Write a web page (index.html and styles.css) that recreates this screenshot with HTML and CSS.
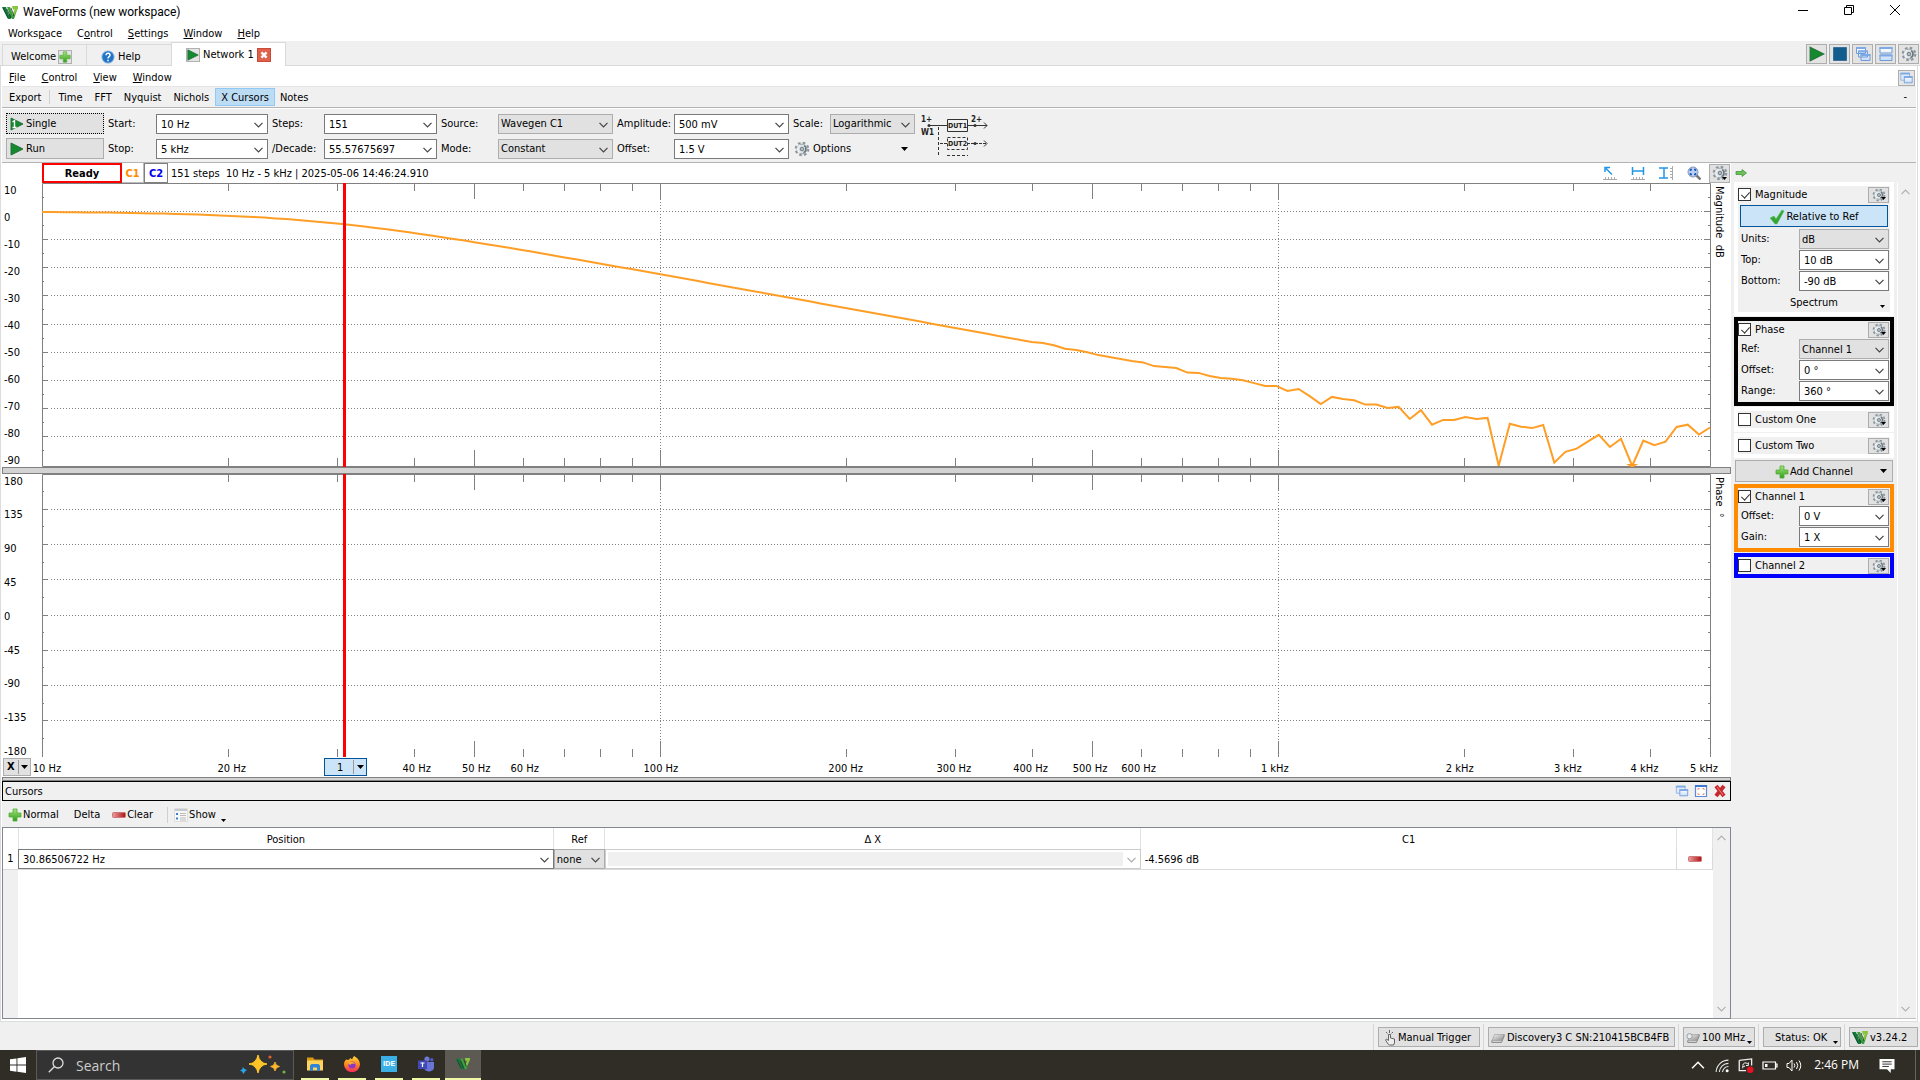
FILE: index.html
```html
<!DOCTYPE html>
<html lang="en">
<head>
<meta charset="utf-8">
<title>WaveForms (new workspace)</title>
<link rel="stylesheet" href="styles.css">
</head>
<body>
<svg class="defs" aria-hidden="true">
  <defs>
    <linearGradient id="g-plus" x1="0" y1="0" x2="0" y2="1"><stop offset="0" stop-color="#a5e27c"/><stop offset="1" stop-color="#2f9e1c"/></linearGradient>
    <linearGradient id="g-minus" x1="0" y1="0" x2="1" y2="0"><stop offset="0" stop-color="#e9a0a0"/><stop offset="1" stop-color="#b01217"/></linearGradient>
    <linearGradient id="g-win" x1="0" y1="0" x2="0" y2="1"><stop offset="0" stop-color="#fff"/><stop offset="1" stop-color="#c9dcf6"/></linearGradient>
    <linearGradient id="g-metal" x1="0" y1="0" x2="1" y2="1"><stop offset="0" stop-color="#f2f2f2"/><stop offset="1" stop-color="#8a8a8a"/></linearGradient>
    <linearGradient id="g-fox" x1="0" y1="0" x2="0" y2="1"><stop offset="0" stop-color="#ffd83a"/><stop offset=".5" stop-color="#ff8a1e"/><stop offset="1" stop-color="#f5275e"/></linearGradient>
  </defs>
  <symbol id="chev" viewBox="0 0 9 6"><path d="M.5.8 4.500 4.800 8.500.8" fill="none" stroke="currentColor" stroke-width="1.200"/></symbol>
  <symbol id="caret" viewBox="0 0 7 4"><path d="M0 0h7L3.500 4z" fill="#000"/></symbol>
  <symbol id="play" viewBox="0 0 14 14"><path d="M1 1 13 7 1 13z" fill="#15892e" stroke="#24703a"/></symbol>
  <symbol id="single" viewBox="0 0 14 14"><path d="M1 1 13 7 1 13z" fill="#15892e" stroke="#24703a"/><path d="M2.500 5 4.500 3.600V10.500M2.500 10.500h4" fill="none" stroke="#fff" stroke-width="1.400"/></symbol>
  <symbol id="gear" viewBox="0 0 16 16"><circle cx="8" cy="8" r="6.300" fill="none" stroke="#8a959c" stroke-width="2" stroke-dasharray="2.600 2.350"/><circle cx="8" cy="8" r="4.900" fill="#dfe5e8" stroke="#98a3aa"/><path d="M6 4.200a4.200 4.200 0 0 0 0 7.600" fill="none" stroke="#f4f7f8" stroke-width="1.200"/><path d="M10.200 4.600a4 4 0 0 1-.8 7" fill="none" stroke="#68747b" stroke-width="1.500"/><circle cx="8" cy="8" r="1.800" fill="#b3bcc1" stroke="#5d686e" stroke-width=".8"/></symbol>
  <symbol id="plus" viewBox="0 0 14 14"><path d="M5 1h4v4h4v4H9v4H5V9H1V5h4z" fill="url(#g-plus)" stroke="#4faf34" stroke-width=".8"/></symbol>
  <symbol id="minus" viewBox="0 0 14 6"><rect x=".5" y=".5" width="13" height="5" rx="1" fill="url(#g-minus)" stroke="#c77"/></symbol>
  <symbol id="logo" viewBox="0 0 16 13"><path d="M0 1h4l3 8 1-3 2 5-1.500 2H6z" fill="#0f7a3c"/><path d="M5 1h3l3 8 3-8h2l-4 12h-2z" fill="#3f9e3c"/><path d="M10 0h6v2l-4 8-1-3 2-4-2 1z" fill="#8ac53f"/><path d="M1 2 6 12M5 3l4 9M9 2l3 8" stroke="#143c26" stroke-width=".8" fill="none"/></symbol>
  <symbol id="wins" viewBox="0 0 16 16"><g fill="url(#g-win)" stroke="#6f9bd8"><path d="M1.500 1.500h9v6h-9zM3.500 5h9v6h-9zM6 8.500h9v6H6z"/></g><path d="M1 2h10M3 5.500h10M5.500 9h10" stroke="#7fa9e4" stroke-width="2"/></symbol>
  <symbol id="wins2" viewBox="0 0 16 16"><path d="M1.500 2.500h10v8h-10z" fill="#dfeafa" stroke="#8fb2df"/><path d="M5.500 6.500h9v7h-9z" fill="url(#g-win)" stroke="#6f9bd8"/><path d="M1 3h11M5 7h10" stroke="#7fa9e4" stroke-width="2"/></symbol>
  <symbol id="tiles" viewBox="0 0 16 16"><path d="M2 1.500h12v5.500H2zM2 9h12v5.500H2z" fill="url(#g-win)" stroke="#6f9bd8"/><path d="M1.500 2h13M1.500 9.500h13" stroke="#7fa9e4" stroke-width="2"/></symbol>
</svg>

<header class="titlebar">
  <svg class="i-logo"><use href="#logo"/></svg>
  <h1>WaveForms (new workspace)</h1>
  <div class="winctl">
    <button aria-label="Minimize"><svg viewBox="0 0 12 12"><path d="M1 6.500h10"/></svg></button>
    <button aria-label="Restore"><svg viewBox="0 0 12 12"><path d="M1.500 3.500h7v7h-7zM3.500 3.500v-2h7v7h-2"/></svg></button>
    <button aria-label="Close"><svg viewBox="0 0 12 12"><path d="M1 1 11 11M11 1 1 11"/></svg></button>
  </div>
</header>

<nav class="menu">
  <a href="#">Works<u>p</u>ace</a><a href="#">C<u>o</u>ntrol</a><a href="#"><u>S</u>ettings</a><a href="#"><u>W</u>indow</a><a href="#"><u>H</u>elp</a>
</nav>

<div class="tabs">
  <button class="tab welcome">Welcome <span class="boxed"><svg><use href="#plus"/></svg></span></button>
  <button class="tab help"><svg class="i-help" viewBox="0 0 14 14"><circle cx="7" cy="7" r="6.300" fill="#2274c8" stroke="#bcd3ea"/><path d="M5 5.200c0-2.600 4-2.500 4 0C9 6.800 7 6.600 7 8.500M7 9.700v1.500" fill="none" stroke="#fff" stroke-width="1.500"/></svg> Help</button>
  <button class="tab active"><span class="boxed"><svg><use href="#play"/></svg></span>Network 1<span class="boxed close"><svg viewBox="0 0 14 14"><path d="M4 4 10 10M10 4 4 10" stroke="#fff" stroke-width="2.800"/></svg></span></button>
  <div class="tabtools">
    <button aria-label="Run all"><svg><use href="#play"/></svg></button>
    <button aria-label="Stop all"><svg viewBox="0 0 14 14"><path d="M.5.500h13v13H.5z" fill="#135c8e" stroke="#3a7099"/></svg></button>
    <button aria-label="Cascade"><svg><use href="#wins"/></svg></button>
    <button aria-label="Tile"><svg><use href="#tiles"/></svg></button>
    <button aria-label="Settings"><svg><use href="#gear"/></svg></button>
  </div>
</div>

<main class="frame">
  <nav class="menu inner">
    <a href="#"><u>F</u>ile</a><a href="#"><u>C</u>ontrol</a><a href="#"><u>V</u>iew</a><a href="#"><u>W</u>indow</a>
    <button class="undock" aria-label="Undock"><svg><use href="#wins2"/></svg></button>
  </nav>
  <div class="toolbar">
    <button>Export</button><i class="sep"></i><button>Time</button><button>FFT</button><button>Nyquist</button><button>Nichols</button><button class="on">X Cursors</button><button class="notes">Notes</button><span class="dash">-</span>
  </div>

  <section class="params">
    <button class="push focus"><svg><use href="#single"/></svg>Single</button>
    <label for="start">Start:</label>
    <div class="combo"><input id="start" value="10 Hz"><svg><use href="#chev"/></svg></div>
    <label for="steps">Steps:</label>
    <div class="combo"><input id="steps" value="151"><svg><use href="#chev"/></svg></div>
    <label for="source">Source:</label>
    <div class="combo pick"><select id="source"><option>Wavegen C1</option></select><svg><use href="#chev"/></svg></div>
    <label for="amp">Amplitude:</label>
    <div class="combo"><input id="amp" value="500 mV"><svg><use href="#chev"/></svg></div>
    <label for="scale">Scale:</label>
    <div class="combo pick"><select id="scale"><option>Logarithmic</option></select><svg><use href="#chev"/></svg></div>
    <svg class="diagram" viewBox="0 0 70 42">
      <g fill="none" stroke="#333"><path d="M7 10.500h19M46 10.500h20M63 7.500l3 3-3 3M26.500 4.500h20v12h-20z"/><path d="M17.500 12v30" stroke-dasharray="3 2"/><path d="M19 28.500h7M46 28.500h20" stroke-dasharray="3 1"/><path d="M63 25.500l3 3-3 3"/><path d="M26.500 22.500h20v12h-20zM26 40.500h21" stroke-dasharray="3 2"/></g>
      <g fill="#333"><circle cx="8" cy="10.500" r="1.500"/><circle cx="54" cy="10.500" r="1.500"/><circle cx="54" cy="28.500" r="1.500"/></g>
      <g class="dut"><text x="0" y="7">1+</text><text x="0" y="20">W1</text><text x="50" y="7">2+</text><text x="27" y="13">DUT1</text><text x="27" y="31">DUT2</text></g>
    </svg>
    <button class="push"><svg><use href="#play"/></svg>Run</button>
    <label for="stop">Stop:</label>
    <div class="combo"><input id="stop" value="5 kHz"><svg><use href="#chev"/></svg></div>
    <label for="decade">/Decade:</label>
    <div class="combo"><input id="decade" value="55.57675697"><svg><use href="#chev"/></svg></div>
    <label for="mode">Mode:</label>
    <div class="combo pick"><select id="mode"><option>Constant</option></select><svg><use href="#chev"/></svg></div>
    <label for="offset">Offset:</label>
    <div class="combo"><input id="offset" value="1.5 V"><svg><use href="#chev"/></svg></div>
    <button class="options"><svg class="i16"><use href="#gear"/></svg>Options<svg class="i-caret"><use href="#caret"/></svg></button>
  </section>

  <div class="work">
    <div class="left">
      <section class="plots">
        <div class="plothead">
          <span class="ready">Ready</span><span class="ch c1">C1</span><span class="ch c2">C2</span>
          <span class="info">151 steps&nbsp; 10 Hz - 5 kHz | 2025-05-06 14:46:24.910</span>
          <div class="tools">
            <button aria-label="Point measure"><svg viewBox="0 0 14 14"><path d="M3 2.500l6 6M2 6V1.500h5" fill="none" stroke="#2196e8" stroke-width="1.500"/><path d="M0 13.500h14M2.500 11v2M5.500 11v2M8.500 11v2M11.500 11v2" stroke="#aaa"/></svg></button>
            <button aria-label="Horizontal measure"><svg viewBox="0 0 14 14"><path d="M1.500 1v8M12.500 1v8M2 5h10" fill="none" stroke="#2196e8" stroke-width="1.500"/><path d="M0 13.500h14M2.500 11v2M5.500 11v2M8.500 11v2M11.500 11v2" stroke="#aaa"/></svg></button>
            <button aria-label="Vertical measure"><svg viewBox="0 0 14 14"><path d="M0 2h9M0 12h9M5 2v10" fill="none" stroke="#2196e8" stroke-width="1.500"/><path d="M13.500 0v14M11 2.500h2M11 5.500h2M11 8.500h2M11 11.500h2" stroke="#aaa"/></svg></button>
            <button aria-label="Zoom"><svg viewBox="0 0 14 14"><path d="M9 9l4.500 4.500" stroke="#777" stroke-width="2.500"/><circle cx="6" cy="6" r="5" fill="#b7cff2" stroke="#8497b5"/><path d="M3.500 5V3.500H5M7 3.500h1.500V5M8.500 7v1.500H7M5 8.500H3.500V7" fill="none" stroke="#2458b8" stroke-width="1.500"/></svg></button>
          </div>
          <button class="gearbtn tall" aria-label="Plot options"><svg class="i16"><use href="#gear"/></svg><svg class="dd"><use href="#caret"/></svg></button>
        </div>
        <div class="plotrow">
          <div class="yaxis"><span>10</span><span>0</span><span>-10</span><span>-20</span><span>-30</span><span>-40</span><span>-50</span><span>-60</span><span>-70</span><span>-80</span><span>-90</span></div>
          <div class="canvas" id="mag"></div>
          <div class="vname">Magnitude&nbsp; dB</div>
        </div>
        <div class="splitter"></div>
        <div class="plotrow">
          <div class="yaxis"><span>180</span><span>135</span><span>90</span><span>45</span><span>0</span><span>-45</span><span>-90</span><span>-135</span><span>-180</span></div>
          <div class="canvas" id="phase"></div>
          <div class="vname">Phase&nbsp; °</div>
        </div>
        <div class="xrow">
          <button class="split-btn"><b>X</b><svg><use href="#caret"/></svg></button>
          <div class="xaxis">
            <span style="left:0%">10 Hz</span><span style="left:11.15%">20 Hz</span><span style="left:22.31%">40 Hz</span><span style="left:25.9%">50 Hz</span><span style="left:28.83%">60 Hz</span><span style="left:37.05%">100 Hz</span><span style="left:48.2%">200 Hz</span><span style="left:54.73%">300 Hz</span><span style="left:59.36%">400 Hz</span><span style="left:62.95%">500 Hz</span><span style="left:65.88%">600 Hz</span><span style="left:74.1%">1 kHz</span><span style="left:85.26%">2 kHz</span><span style="left:91.78%">3 kHz</span><span style="left:96.41%">4 kHz</span><span style="left:100%">5 kHz</span>
            <button class="split-btn cursor" style="left:18.05%"><span>1</span><svg><use href="#caret"/></svg></button>
          </div>
        </div>
      </section>
      <div class="splitter thin"></div>
      <section class="dock">
        <div class="dockhead"><h2>Cursors</h2>
          <button aria-label="Float"><svg><use href="#wins2"/></svg></button>
          <button aria-label="Maximize"><svg viewBox="0 0 14 14"><path d="M1.500 1.500h11v11h-11z" fill="#fff" stroke="#5b8ad6" stroke-width="1.200"/><path d="M1 2h12" stroke="#3f78d0" stroke-width="2"/><path d="M4 6V4.500h1.500M8.500 4.500H10V6M10 9v1.500H8.500M5.500 10.500H4V9" fill="none" stroke="#e58a7a"/></svg></button>
          <button aria-label="Close"><svg viewBox="0 0 14 14"><path d="M3 2l8 10M11 2 3 12" stroke="#c8282d" stroke-width="4"/><path d="M4 3l6 8" stroke="#e98585"/></svg></button>
        </div>
        <div class="docktools">
          <button><svg class="i14"><use href="#plus"/></svg>Normal</button><button class="delta">Delta</button><button><svg class="i-minus"><use href="#minus"/></svg>Clear</button><i class="sep"></i>
          <button class="show"><svg class="i14" viewBox="0 0 14 14"><path d="M.5.500h13v13H.5z" fill="#f8f8f8" stroke="#ddd"/><path d="M1 2h12" stroke="#c5cad0" stroke-width="2"/><path d="M2 6h2M2 10.500h2" stroke="#3a80cf" stroke-width="2"/><path d="M6 5.500h6M6 7.500h6M6 10h6M6 12h6" stroke="#bbb"/></svg>Show<svg class="i-caret low"><use href="#caret"/></svg></button>
        </div>
        <div class="grid">
          <div class="gridbody">
            <table>
              <colgroup><col class="k-n"><col><col class="k-ref"><col><col><col class="k-del"></colgroup>
              <thead><tr><th></th><th>Position</th><th>Ref</th><th>Δ X</th><th>C1</th><th></th></tr></thead>
              <tbody><tr>
                <td class="num">1</td>
                <td><div class="combo"><input aria-label="Position" value="30.86506722 Hz"><svg><use href="#chev"/></svg></div></td>
                <td><div class="combo pick"><select aria-label="Ref"><option>none</option></select><svg><use href="#chev"/></svg></div></td>
                <td><div class="combo off"><input aria-label="Delta X" disabled><svg><use href="#chev"/></svg></div></td>
                <td class="val">-4.5696 dB</td>
                <td class="del"><button aria-label="Remove"><svg class="i-minus"><use href="#minus"/></svg></button></td>
              </tr></tbody>
            </table>
          </div>
          <div class="scroll"><svg class="up"><use href="#chev"/></svg><svg><use href="#chev"/></svg></div>
        </div>
      </section>
    </div>

    <aside>
      <div class="sidehead"><svg viewBox="0 0 12 8"><path d="M1 2.500h6V.500L11.500 4 7 7.500v-2H1z" fill="#6fbf5a" stroke="#3f9a3a" stroke-width=".8"/></svg></div>
      <div class="sidebody">
        <div class="cards">
          <section class="card">
            <div class="ch-head"><label><input type="checkbox" checked>Magnitude</label><button class="gearbtn" aria-label="Magnitude options"><svg class="i14"><use href="#gear"/></svg><svg class="dd"><use href="#caret"/></svg></button></div>
            <button class="rel"><svg viewBox="0 0 16 16"><path d="M1 9l4-2 2 3 6-9 2 1-7 13H6z" fill="#35a535" stroke="#5fbf55" stroke-width=".6"/></svg>Relative to Ref</button>
            <div class="field"><label for="units">Units:</label><div class="combo pick"><select id="units"><option>dB</option></select><svg><use href="#chev"/></svg></div></div>
            <div class="field"><label for="top">Top:</label><div class="combo"><input id="top" value="10 dB"><svg><use href="#chev"/></svg></div></div>
            <div class="field"><label for="bottom">Bottom:</label><div class="combo"><input id="bottom" value="-90 dB"><svg><use href="#chev"/></svg></div></div>
            <button class="spectrum">Spectrum<svg class="dd"><use href="#caret"/></svg></button>
          </section>
          <section class="card black">
            <div class="ch-head"><label><input type="checkbox" checked>Phase</label><button class="gearbtn" aria-label="Phase options"><svg class="i14"><use href="#gear"/></svg><svg class="dd"><use href="#caret"/></svg></button></div>
            <div class="field"><label for="ref">Ref:</label><div class="combo pick"><select id="ref"><option>Channel 1</option></select><svg><use href="#chev"/></svg></div></div>
            <div class="field"><label for="poff">Offset:</label><div class="combo"><input id="poff" value="0 °"><svg><use href="#chev"/></svg></div></div>
            <div class="field"><label for="range">Range:</label><div class="combo"><input id="range" value="360 °"><svg><use href="#chev"/></svg></div></div>
          </section>
          <section class="card">
            <div class="ch-head"><label><input type="checkbox">Custom One</label><button class="gearbtn" aria-label="Custom One options"><svg class="i14"><use href="#gear"/></svg><svg class="dd"><use href="#caret"/></svg></button></div>
          </section>
          <section class="card">
            <div class="ch-head"><label><input type="checkbox">Custom Two</label><button class="gearbtn" aria-label="Custom Two options"><svg class="i14"><use href="#gear"/></svg><svg class="dd"><use href="#caret"/></svg></button></div>
          </section>
          <button class="addch"><svg class="i14"><use href="#plus"/></svg>Add Channel<svg class="i-caret"><use href="#caret"/></svg></button>
          <section class="card orange">
            <div class="ch-head"><label><input type="checkbox" checked>Channel 1</label><button class="gearbtn" aria-label="Channel 1 options"><svg class="i14"><use href="#gear"/></svg><svg class="dd"><use href="#caret"/></svg></button></div>
            <div class="field"><label for="coff">Offset:</label><div class="combo"><input id="coff" value="0 V"><svg><use href="#chev"/></svg></div></div>
            <div class="field"><label for="gain">Gain:</label><div class="combo"><input id="gain" value="1 X"><svg><use href="#chev"/></svg></div></div>
          </section>
          <section class="card blue">
            <div class="ch-head"><label><input type="checkbox">Channel 2</label><button class="gearbtn" aria-label="Channel 2 options"><svg class="i14"><use href="#gear"/></svg><svg class="dd"><use href="#caret"/></svg></button></div>
          </section>
        </div>
        <div class="scroll"><svg class="up"><use href="#chev"/></svg><svg><use href="#chev"/></svg></div>
      </div>
    </aside>
  </div>
</main>

<footer class="status">
  <button class="s-trig"><svg viewBox="0 0 12 16"><path d="M4.500 14.500 1.500 10l1-1 2 1.500V4.500h2V8l4 1v4l-1 2h-4zM5.500 3V0M2 2l1.500 1.500M9 2 7.500 3.500" fill="#eee" stroke="#555" stroke-width=".9"/></svg>Manual Trigger</button>
  <button class="s-dev"><svg viewBox="0 0 16 12"><path d="M4 2h11l-3 7H1z" fill="url(#g-metal)" stroke="#999" stroke-width=".7"/><path d="M1 9v2h11l3-7V2" fill="none" stroke="#777"/></svg>Discovery3 C SN:210415BCB4FB</button>
  <button class="s-mhz"><svg viewBox="0 0 16 12"><path d="M5 2h10l-3 7H2z" fill="url(#g-metal)" stroke="#999" stroke-width=".7"/><path d="M2 9v2h10l3-7V2" fill="none" stroke="#777"/><circle cx="4" cy="4" r="3" fill="#e8ecee" stroke="#8b969d"/></svg>100 MHz<svg class="dd"><use href="#caret"/></svg></button>
  <button class="s-stat">Status: OK<svg class="dd"><use href="#caret"/></svg></button>
  <button class="s-ver"><svg class="i-logo"><use href="#logo"/></svg>v3.24.2</button>
</footer>

<div class="taskbar">
  <button class="start" aria-label="Start"><svg viewBox="0 0 16 16"><path d="M0 2.300 6.500 1.400V7.600H0zM7.400 1.300 16 0v7.600H7.400zM0 8.500h6.500v6.200L0 13.800zM7.400 8.500H16V16l-8.600-1.200z" fill="#fff"/></svg></button>
  <label class="search">
    <svg class="lens" viewBox="0 0 16 16"><circle cx="10" cy="6" r="5" fill="none" stroke="#ddd" stroke-width="1.300"/><path d="M6.500 9.500.8 15.200" stroke="#ddd" stroke-width="1.300"/></svg>
    <input placeholder="Search" aria-label="Search">
    <svg class="spark" viewBox="0 0 46 20"><path d="M18 0q1.500 8 9 9-7.500 1-9 9-1.500-8-9-9 7.500-1 9-9z" fill="#ffc526" stroke="#ffc526"/><path d="M35 7q.6 4 4.500 4.500Q35.600 12 35 16q-.6-4-4.500-4.500Q34.400 11 35 7z" fill="#ffb92e" stroke="#ffb92e" stroke-width=".8"/><path d="M3 12l1.500 2L7 15l-2 1.500L3.500 19 2 16.500 0 15.500l2-1z" fill="#2aa5e8"/><circle cx="30" cy="2" r="1.600" fill="#e2612a"/><circle cx="44" cy="17" r="1.600" fill="#6ab344"/></svg>
  </label>
  <button class="app" aria-label="File Explorer"><svg viewBox="0 0 16 16"><path d="M0 1.500h6l1.500 2H16V7H0z" fill="#d99a10"/><path d="M0 4.500h16v10H0z" fill="#ffd35c"/><path d="M3 15V9.500L4.500 8h7L13 9.500V15h-3v-3.500H6V15z" fill="#2f86d6"/></svg></button>
  <button class="app" aria-label="Firefox"><svg viewBox="0 0 16 16"><path d="M2 3.500 4 4l1.500-.8L6 2l2 1.200L10 0c3 1.500 6 4.500 6 8.500a7.800 7.500 0 0 1-16 0C0 6.500.8 5 2 3.500z" fill="url(#g-fox)"/><circle cx="8" cy="9" r="3.600" fill="#8b35c9"/><path d="M4 7c2-2 6-1.500 7 1L8 7.500 6 9z" fill="#ffad2a"/></svg></button>
  <button class="app" aria-label="IDE"><span class="ide">IDE</span></button>
  <button class="app" aria-label="Teams"><svg viewBox="0 0 16 16"><circle cx="9" cy="3" r="2.600" fill="#6f78d8"/><circle cx="13.800" cy="3.800" r="1.700" fill="#5059c9"/><path d="M6 6h10v5a4 4 0 0 1-3 4 5 5 0 0 1-7-3z" fill="#6a73d6"/><path d="M0 4.500h9v8.500H0z" fill="#4049b5"/><path d="M2.500 7h4M4.500 7v4" stroke="#fff" stroke-width="1.200"/></svg></button>
  <button class="app current" aria-label="WaveForms"><svg class="i-task" viewBox="0 0 16 16"><use href="#logo" width="16" height="13" y="1"/></svg></button>
  <div class="tray">
    <svg viewBox="0 0 14 14"><path d="M1.500 9.500 7 4l5.500 5.500" fill="none" stroke="#fff" stroke-width="1.400"/></svg>
    <svg viewBox="0 0 14 14"><g fill="none" stroke="#eee"><path d="M1.500 13A11.500 11.500 0 0 1 13 2M4.500 13A8.500 8.500 0 0 1 13 5M7.500 13A5.500 5.500 0 0 1 13 8"/></g><circle cx="11.800" cy="12" r="1.400" fill="#fff"/></svg>
    <svg viewBox="0 0 16 16"><path d="M.8 2.500 14 1v7M.8 2.500v11H8" fill="none" stroke="#eee" stroke-width="1.400"/><path d="M4.500 8a3 3 0 0 1 5-2l1-1v3H8M4.500 11V8.800H7" fill="none" stroke="#fff"/><circle cx="12.500" cy="12.500" r="3.500" fill="#e81123"/></svg>
    <svg viewBox="0 0 16 14"><path d="M1 3.500h12.500v7H1zM13.500 5.500h1.500v3h-1.500" fill="none" stroke="#fff" stroke-width="1.200"/><path d="M3 5.500h2.500v3H3z" fill="#fff"/></svg>
    <svg viewBox="0 0 16 14"><path d="M1 5h2l3-3.500v11L3 9H1zM8 5q1.500 2 0 4M10.500 3.500q2.500 3.500 0 7M13 2q3.500 5 0 10" fill="none" stroke="#fff"/></svg>
    <time>2:46 PM</time>
    <svg class="note" viewBox="0 0 16 16"><path d="M0 1h16v11H12v4l-4-4H0z" fill="#fff"/><path d="M3 4h10M3 6.500h10M3 9h7" stroke="#2e2b26"/></svg>
    <i></i>
  </div>
</div>
<script src="plot.js"></script>
</body>
</html>
```
FILE: styles.css
```css
* { box-sizing: border-box; }
html, body { height: 100%; }
body {
  margin: 0;
  display: flex;
  flex-direction: column;
  background: #fff;
  color: #000;
  font: 11px/14px "DejaVu Sans Condensed", Tahoma, "Liberation Sans", sans-serif;
  overflow: hidden;
}
button, input, select { font: inherit; color: inherit; margin: 0; padding: 0; border: 0; background: none; border-radius: 0; }
button { display: flex; align-items: center; white-space: nowrap; }
a { color: inherit; text-decoration: none; }
h1, h2 { margin: 0; font-weight: 400; font-size: 11px; }
svg { display: block; flex: none; }
.defs { position: absolute; width: 0; height: 0; }
.i14 { width: 14px; height: 14px; }
.i16 { width: 16px; height: 16px; }
.i-logo { width: 16px; height: 13px; }
.i-minus { width: 14px; height: 6px; }
.i-caret { width: 7px; height: 4px; }
.sep { width: 1px; height: 14px; background: #d0d0d0; }

.titlebar { height: 24px; flex: none; display: flex; align-items: center; gap: 5px; padding: 0 2px; }
.titlebar h1 { font: 12px/16px Roboto, "Open Sans", sans-serif; flex: 1; }
.winctl { display: flex; align-self: flex-start; }
.winctl button { width: 46px; height: 20px; justify-content: center; }
.winctl svg { width: 12px; height: 12px; fill: none; stroke: #000; }

.menu { height: 17px; flex: none; display: flex; align-items: center; gap: 15px; padding: 3px 0 0 8px; }
.menu.inner { height: 20px; padding: 3px 1px 0 7px; gap: 16px; }
.undock { margin-left: auto; width: 17px; height: 16px; border: 1px solid #adadad; background: #e6e6e6; }
.undock svg { width: 15px; height: 14px; }

.tabs { height: 25px; flex: none; display: flex; align-items: flex-end; background: #f0f0f0; padding-left: 2px; border-bottom: 1px solid #d9d9d9; }
.tab { height: 21px; border: 1px solid #d9d9d9; border-bottom: 0; gap: 2px; padding: 3px 8px 0; }
.welcome { width: 85px; }
.help { width: 84px; border-left: 0; border-right: 0; padding-left: 14px; gap: 3px; }
.active { height: 24px; width: 115px; background: #fff; margin-bottom: -1px; padding: 1px 0 0 14px; gap: 3px; }
.i-help { width: 14px; height: 14px; }
.boxed { width: 14px; height: 14px; border: 1px solid #b0b0b0; background: #e4e4e4; }
.boxed svg { width: 12px; height: 12px; }
.boxed.close { background: #e0604a; border-color: #c94a38; }
.tabtools { margin-left: auto; display: flex; gap: 2px; padding: 0 1px 1px 0; }
.tabtools button { width: 21px; height: 20px; justify-content: center; background: #e3e3e3; border: 1px solid #adadad; }
.tabtools svg { width: 16px; height: 16px; }
.tabtools button:nth-child(2) svg { width: 14px; height: 14px; }

.frame { flex: 1; min-height: 0; display: flex; flex-direction: column; margin: 0 2px 0 0; border: 1px solid #dcdcdc; border-top: 0; padding: 0 1px 2px; }
.toolbar { height: 22px; flex: none; display: flex; align-items: center; background: #f0f0f0; border-top: 1px solid #e6e6e6; border-bottom: 1px solid #b4b4b4; padding-left: 1px; }
.toolbar button { height: 18px; padding: 2px 6px 0; }
.toolbar .sep { margin: 0 2px; }
.toolbar button.on { background: #bcdcf4; border: 1px solid #90c8f6; padding: 2px 5px 0; }
.toolbar button.notes { padding-left: 5px; }
.dash { margin: 0 9px 0 auto; }

.params {
  flex: none;
  display: grid;
  grid-template: 21px 21px / 98px 44px 112px 48px 113px 53px 115px 53px 115px 33px 85px 70px;
  gap: 4px;
  align-items: center;
  margin-top: 1px;
  padding: 4px 4px 3px;
  background: #f0f0f0;
  border-bottom: 1px solid #b4b4b4;
}
.push { height: 21px; background: #e1e1e1; border: 1px solid #adadad; gap: 2px; padding-left: 3px; }
.push svg { width: 14px; height: 14px; }
.push.focus { border: 1px dotted #000; outline: 0; }
.diagram { width: 70px; height: 42px; grid-column: 12; grid-row: 1 / 3; margin-left: 2px; }
.dut { font-size: 8px; font-weight: 700; fill: #222; }
.dut text:nth-child(n+4) { font-size: 7px; }
.options { grid-column: 10 / 12; gap: 3px; height: 20px; padding: 0 7px 0 1px; }
.options .i-caret { margin-left: auto; }

.combo { position: relative; height: 20px; width: 100%; background: #fff; border: 1px solid #7a7a7a; }
.combo input, .combo select { width: 100%; height: 18px; padding: 1px 16px 0 4px; display: block; appearance: none; outline: 0; }
.combo > svg { position: absolute; right: 4px; top: 7px; width: 9px; height: 6px; color: #444; pointer-events: none; }
.combo.pick { background: #e1e1e1; border-color: #adadad; }
.combo.pick select { padding-left: 2px; }
.combo.off { border-color: #ccc; padding: 2px 17px 2px 2px; }
.combo.off input { height: 14px; background: #f0f0f0; padding: 0; }
.combo.off > svg { color: #aaa; }

.work { flex: 1; min-height: 0; display: flex; background: #f0f0f0; }
.left { flex: 1; min-width: 0; display: flex; flex-direction: column; background: #fff; }
.plots { flex: 1; min-height: 0; display: flex; flex-direction: column; }
.plothead { height: 20px; flex: none; display: flex; align-items: center; padding: 0 1px 0 40px; }
.ready { width: 80px; height: 20px; border: 2px solid #f00; text-align: center; font-weight: 700; line-height: 18px; }
.ch { width: 22px; height: 20px; border-right: 1px solid #bbb; border-bottom: 1px solid #bbb; text-align: center; font-weight: 700; line-height: 21px; }
.c1 { color: #ff8c00; }
.c2 { width: 24px; color: #00e; border: 1px solid #808080; line-height: 20px; }
.info { margin-left: 3px; padding-top: 2px; }
.tools { margin-left: auto; display: flex; gap: 14px; padding-right: 8px; }
.tools svg { width: 14px; height: 14px; }
.gearbtn { position: relative; width: 21px; height: 16px; flex: none; justify-content: center; background: #e1e1e1; border: 1px solid #adadad; }
.gearbtn.tall { height: 19px; }
.dd { position: absolute; right: 2px; bottom: 2px; width: 5px; height: 3px; }

.plotrow { flex: 1 1 0; min-height: 0; display: flex; }
.yaxis { width: 40px; display: flex; flex-direction: column; justify-content: space-between; padding: 1px 0 0 2px; margin-bottom: -2px; }
.canvas { flex: 1; min-width: 0; position: relative; overflow: hidden; }
.canvas svg { position: absolute; inset: 0; width: 100%; height: 100%; }
.vname { width: 20px; writing-mode: vertical-rl; line-height: 14px; padding: 3px 5px 0 0; }
.splitter { height: 7px; flex: none; background: #d3d3d3; border: 1px solid #808080; z-index: 1; }
.splitter.thin { height: 4px; }
.xrow { height: 20px; flex: none; display: flex; align-items: center; }
.split-btn { width: 28px; height: 18px; flex: none; margin-left: 1px; background: #e1e1e1; border: 1px solid #adadad; padding-left: 3px; }
.split-btn svg { order: 2; width: 7px; height: 4px; margin: 0 2px 0 auto; }
.split-btn::before { content: ""; order: 1; width: 1px; height: 14px; background: #999; margin-left: 3px; }
.xaxis { flex: 1; position: relative; height: 20px; margin: 0 27px 0 16px; line-height: 23px; }
.xaxis > span { position: absolute; transform: translateX(-50%); white-space: nowrap; }
.split-btn.cursor { position: absolute; top: 1px; width: 43px; margin-left: -22px; padding-left: 12px; background: #cce4f7; border-color: #005499; }
.split-btn.cursor::before { margin-left: 10px; }

.dock { height: 238px; flex: none; display: flex; flex-direction: column; background: #f0f0f0; }
.dockhead { height: 20px; flex: none; display: flex; align-items: center; gap: 5px; border: 1px solid #000; padding: 0 3px 0 2px; }
.dockhead h2 { flex: 1; padding-top: 2px; }
.dockhead svg { width: 14px; height: 14px; }
.docktools { height: 26px; flex: none; display: flex; align-items: center; padding: 1px 0 0 6px; }
.docktools button { gap: 1px; }
.docktools .delta { margin: 0 12px 0 15px; }
.docktools .sep { margin: 0 6px 0 14px; height: 16px; }
.low { align-self: flex-end; width: 5px; height: 3px; margin-left: 4px; }
.grid { flex: 1; display: flex; border: 1px solid #828790; min-height: 0; }
.gridbody { flex: 1; background: linear-gradient(90deg, #f0f0f0 15px, #fff 15px); }
table { width: 100%; table-layout: fixed; border-collapse: collapse; background: #fff; }
.k-n { width: 15px; }
.k-ref { width: 51px; }
.k-del { width: 36px; }
th { height: 21px; padding: 2px 0 0; font-weight: 400; border-right: 1px solid #e2e2e2; }
td { height: 20px; padding: 0; border-bottom: 1px solid #dadada; }
td.num { text-align: center; }
td.val { padding: 1px 0 0 4px; }
td.del { border-left: 1px solid #dadada; border-right: 1px solid #dadada; }
td.del button { margin: 0 auto; }
.scroll { width: 17px; flex: none; background: #f0f0f0; color: #b0b0b0; display: flex; flex-direction: column; justify-content: space-between; align-items: center; padding: 7px 0 6px; }
.scroll svg { width: 9px; height: 6px; }
.scroll .up { transform: rotate(180deg); }

aside { width: 185px; flex: none; display: flex; flex-direction: column; padding-left: 3px; border-bottom: 1px solid #c0c0c0; }
.sidehead { height: 19px; display: flex; align-items: center; padding-left: 1px; }
.sidehead svg { width: 12px; height: 8px; }
.sidebody { flex: 1; min-height: 0; display: flex; justify-content: space-between; }
.sidebody .scroll { border-left: 1px solid #fff; width: 19px; padding-right: 3px; }
.cards { width: 160px; display: flex; flex-direction: column; gap: 1px; }
.card { border: 4px solid #fff; padding-bottom: 1px; display: flex; flex-direction: column; gap: 1px; }
.card:not(:has(.field)) { padding-bottom: 0; }
.black { border-color: #000; }
.orange { border-color: #ff8c00; }
.blue { border-color: #00f; }
.ch-head { height: 17px; display: flex; align-items: center; justify-content: space-between; padding-right: 1px; }
.ch-head label { display: flex; align-items: center; gap: 4px; }
.ch-head input { appearance: none; width: 13px; height: 13px; border: 1px solid #333; background: #fff; position: relative; }
.ch-head input:checked::after { content: ""; position: absolute; left: 4px; top: 1px; width: 4px; height: 7px; border: solid #333; border-width: 0 1px 1px 0; transform: rotate(42deg); }
.rel { height: 22px; margin: 1px 2px; padding-top: 1px; justify-content: center; gap: 1px; background: #cce4f7; border: 1px solid #005499; }
.rel svg { width: 16px; height: 16px; }
.field { display: grid; grid-template-columns: 58px 90px; justify-content: end; padding-right: 1px; }
.field label { padding-top: 3px; }
.spectrum { position: relative; height: 19px; padding-top: 2px; justify-content: center; }
.spectrum .dd { right: 5px; bottom: 3px; }
.addch { position: relative; height: 22px; margin: 1px; padding-top: 1px; justify-content: center; gap: 1px; background: #e1e1e1; border: 1px solid #adadad; }
.addch .i-caret { position: absolute; right: 5px; top: 8px; }

.status { height: 28px; flex: none; display: flex; justify-content: flex-end; align-items: center; gap: 8px; background: #f0f0f0; padding: 2px 2px 0 0; }
.status button { position: relative; height: 20px; background: #e1e1e1; border: 1px solid #adadad; gap: 2px; padding: 1px 0 0 5px; }
.status button::before { content: ""; position: absolute; left: -6px; top: -4px; width: 1px; height: 26px; background: #d7d7d7; }
.status svg { width: 14px; height: 12px; }
.status .dd { width: 5px; height: 3px; }
.s-trig { width: 102px; }
.status .s-trig svg { width: 12px; height: 16px; }
.s-dev { width: 187px; }
.s-mhz { width: 72px; }
.s-stat { width: 78px; }
.status .s-stat { padding-left: 11px; }
.s-ver { width: 69px; }
.status .s-ver svg { width: 16px; height: 13px; }
.status .s-dev, .status .s-mhz, .status .s-ver { padding-left: 2px; }

.taskbar { height: 30px; flex: none; display: flex; background: #302d26; color: #fff; font-family: "Open Sans", "Noto Sans", sans-serif; }
.start { width: 36px; justify-content: center; }
.start svg { width: 16px; height: 16px; }
.search { width: 258px; display: flex; align-items: center; background: #333; border: 1px solid #5a5a58; padding: 0 7px 0 11px; }
.lens { width: 16px; height: 16px; }
.search input { flex: 1; min-width: 0; margin-left: 12px; font-size: 14px; line-height: 20px; height: 22px; }
.search input::placeholder { color: #ccc; opacity: 1; }
.spark { width: 46px; height: 20px; }
.app { width: 28px; margin: 0 0 0 9px; justify-content: center; border-bottom: 2px solid #eef8a6; }
.search + .app { margin-left: 7px; }
.app svg { width: 16px; height: 16px; }
.app.current { width: 36px; margin-left: 5px; background: #5d5a54; }
.app .i-task { width: 14px; height: 14px; }
.ide { width: 16px; height: 16px; background: #3bb0e6; font: 700 8px/16px "Roboto", sans-serif; text-align: center; }
.tray { margin-left: auto; display: flex; align-items: center; gap: 8px; }
.tray svg { width: 16px; height: 15px; }
.tray time { font-size: 12px; margin: 0 12px 0 4px; }
.tray i { width: 1px; height: 30px; background: #66635c; margin: 0 4px 0 12px; }
```
FILE: plot.js
```js
// Bode plot: logarithmic frequency axis, 151 points from 10 Hz to 5 kHz.
const F0 = 10, F1 = 5000, STEPS = 151, CURSOR = 30.86506722;
const SPAN = Math.log10(F1 / F0);

// Attenuation in dB from point 90 on.
const TAIL = [
  46.5, 47.3, 48.6, 49.0, 49.8, 50.8, 51.5, 52.2, 52.9, 53.4, 54.7, 55.0, 55.4, 57.0, 57.1,
  58.2, 58.9, 59.2, 59.7, 60.7, 61.7, 61.7, 63.5, 62.8, 65.3, 68.1, 65.6, 66.3, 66.8, 68.3,
  68.3, 69.5, 69.1, 73.4, 70.3, 75.4, 73.7, 73.7, 72.7, 73.4, 73.0, 89.9, 75.1, 76.1, 76.6,
  75.5, 88.8, 85.0, 83.9, 81.4, 79.0, 83.3, 80.4, 91.0, 81.0, 82.6, 81.4, 76.2, 75.4, 78.9, 76.4
];

// Second-order low-pass response, fc = 28 Hz.
function gain(f) {
  const x = (f / 28) ** 2;
  return -10 * Math.log10((1 - x) ** 2 + x / 0.427);
}

const levels = Array.from({ length: STEPS }, (_, i) =>
  i < 90 ? gain(F0 * 10 ** (SPAN * i / (STEPS - 1))) : -TAIL[i - 90]);

function draw(id, divisions, trace) {
  const host = document.getElementById(id);
  const w = host.clientWidth - 1, h = host.clientHeight - 1;
  const px = f => Math.round(Math.log10(f / F0) / SPAN * w) + 0.5;
  let solid = `M.5 .5H${w + 0.5}V${h + 0.5}H.5Z`, dots = '';
  for (let d = 10; d < F1; d *= 10) {
    for (let m = 1; m < 10; m++) {
      const f = d * m;
      if (f <= F0 || f >= F1) continue;
      const x = px(f), len = m === 1 || m === 5 ? 16 : 8;
      solid += `M${x} 0v${len}M${x} ${h}v${-len}`;
      if (m === 1) dots += `M${x} 1V${h}`;
    }
  }
  for (let i = 1; i < divisions * 2; i++) {
    const y = Math.floor(i * (h - 1) / divisions / 2) + 0.5;
    const len = i % 2 ? 2 : 6;
    solid += `M0 ${y}h${len}M${w} ${y}h${-len}`;
    if (i % 2 === 0) dots += `M9 ${y}H${w - 6}`;
  }
  let curve = '';
  if (trace) {
    const pts = trace.map((v, i) =>
      `${(i * w / (STEPS - 1)).toFixed(1)},${Math.min(h, (10 - v) / 100 * h).toFixed(1)}`);
    const cx = 143 * w / (STEPS - 1);
    curve = `<polyline points="${pts.join(' ')}" fill="none" stroke="#ff9e26" stroke-width="2"/>
      <path d="M${cx - 6} ${h - 2}h12l-6 4z" fill="#ff9e26"/>`;
  }
  host.innerHTML = `<svg>
    <path d="${dots}" stroke="#808080" stroke-dasharray="1 2" fill="none"/>
    <path d="${solid}" stroke="#808080" fill="none"/>${curve}
    <path d="M${px(CURSOR)} 0V${h + 1}" stroke="#f00" stroke-width="3"/></svg>`;
}

function drawAll() {
  draw('mag', 10, levels);
  draw('phase', 8, null);
}
drawAll();
window.addEventListener('resize', drawAll);
```
